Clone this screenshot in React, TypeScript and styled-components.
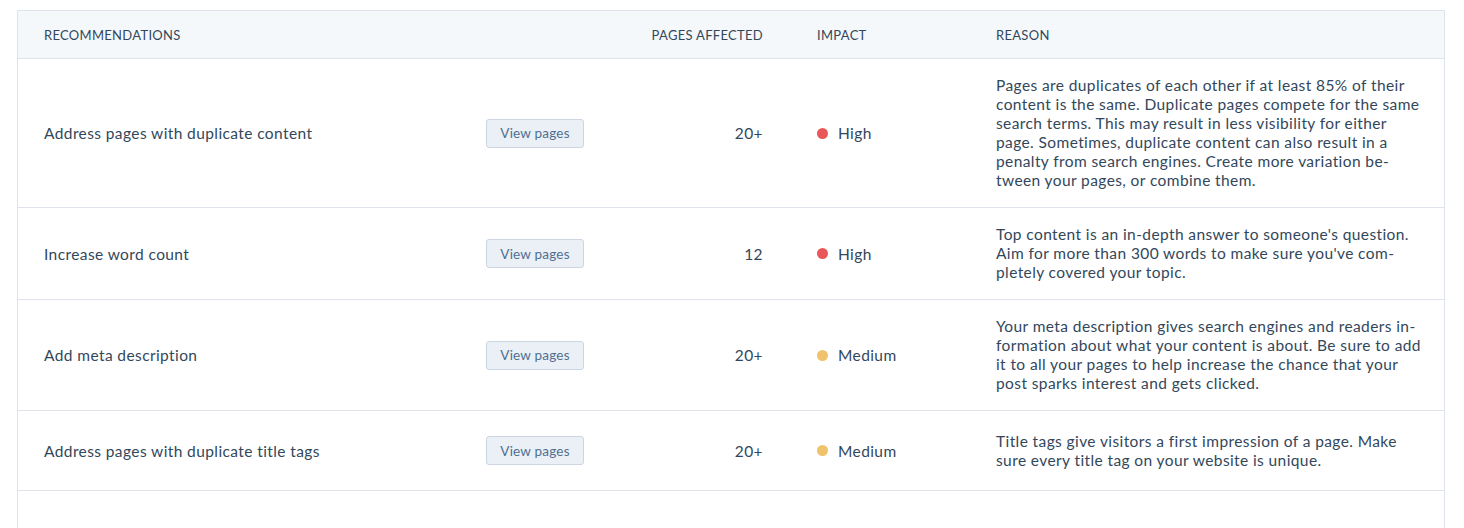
import { styled, createGlobalStyle } from "styled-components";

const Global = createGlobalStyle`
  body {
    margin: 0;
    background: #fff;
    font-family: Lato, "Open Sans", sans-serif;
    color: #33475b;
  }
`;

const Page = styled.div`
  padding: 10px 19px 0 17px;
  height: 528px;
  box-sizing: border-box;
  overflow: hidden;
`;

const Table = styled.div`
  border: 1px solid #dfe3eb;
  border-bottom: none;
`;

const Row = styled.div<{ $head?: boolean }>`
  display: grid;
  grid-template-columns: 442px 134px 143px 233px 1fr;
  align-items: center;
  padding: 17px 20px 17px 26px;
  min-height: ${(p) => (p.$head ? "48px" : "80px")};
  box-sizing: border-box;
  border-bottom: 1px solid #dfe3eb;
  background: ${(p) => (p.$head ? "#f5f8fa" : "#fff")};
  font-size: 15.5px;
  letter-spacing: 0.4px;
  ${(p) => (p.$head ? "padding-top: 0; padding-bottom: 0;" : "")}
`;

const HeadCell = styled.div<{ $right?: boolean; $pad?: boolean }>`
  font-size: 13px;
  text-transform: uppercase;
  letter-spacing: 0.3px;
  text-align: ${(p) => (p.$right ? "right" : "left")};
  padding-left: ${(p) => (p.$pad ? "54px" : "0")};
`;

const Cell = styled.div<{ $right?: boolean }>`
  text-align: ${(p) => (p.$right ? "right" : "left")};
`;

const Button = styled.button`
  width: 98px;
  height: 29px;
  border: 1px solid #cbd6e2;
  border-radius: 3px;
  background: #eaf0f6;
  color: #506e91;
  font-family: inherit;
  font-size: 13.5px;
  letter-spacing: 0.2px;
  padding: 0;
`;

const Impact = styled.div`
  display: flex;
  align-items: center;
  gap: 10px;
  padding-left: 54px;
`;

const Dot = styled.span<{ $color: string }>`
  width: 11px;
  height: 11px;
  border-radius: 50%;
  background: ${(p) => p.$color};
`;

const Reason = styled.div`
  line-height: 19px;
  max-width: 428px;
  hyphens: manual;
`;

const rows = [
  {
    title: "Address pages with duplicate content",
    pages: "20+",
    impact: "High",
    reason:
      "Pages are duplicates of each other if at least 85% of their content is the same. Duplicate pages compete for the same search terms. This may result in less visibility for either page. Sometimes, duplicate content can also result in a penalty from search engines. Create more variation be\u00adtween your pages, or combine them.",
  },
  {
    title: "Increase word count",
    pages: "12",
    impact: "High",
    reason:
      "Top content is an in-depth answer to someone's question. Aim for more than 300 words to make sure you've com\u00adpletely covered your topic.",
  },
  {
    title: "Add meta description",
    pages: "20+",
    impact: "Medium",
    reason:
      "Your meta description gives search engines and readers in\u00adformation about what your content is about. Be sure to add it to all your pages to help increase the chance that your post sparks interest and gets clicked.",
  },
  {
    title: "Address pages with duplicate title tags",
    pages: "20+",
    impact: "Medium",
    reason:
      "Title tags give visitors a first impression of a page. Make sure every title tag on your website is unique.",
  },
  { title: "", pages: "", impact: "", reason: "" },
];

export default function App() {
  return (
    <Page>
      <Global />
      <Table>
        <Row $head>
          <HeadCell>Recommendations</HeadCell>
          <HeadCell />
          <HeadCell $right>Pages affected</HeadCell>
          <HeadCell $pad>Impact</HeadCell>
          <HeadCell>Reason</HeadCell>
        </Row>
        {rows.map((r, i) => (
          <Row key={i}>
            <Cell>{r.title}</Cell>
            <Cell>{r.title ? <Button>View pages</Button> : null}</Cell>
            <Cell $right>{r.pages}</Cell>
            {r.impact ? (
              <Impact>
                <Dot $color={r.impact === "High" ? "#e8585b" : "#f0c26b"} />
                {r.impact}
              </Impact>
            ) : (
              <Cell />
            )}
            <Reason>{r.reason}</Reason>
          </Row>
        ))}
      </Table>
    </Page>
  );
}
